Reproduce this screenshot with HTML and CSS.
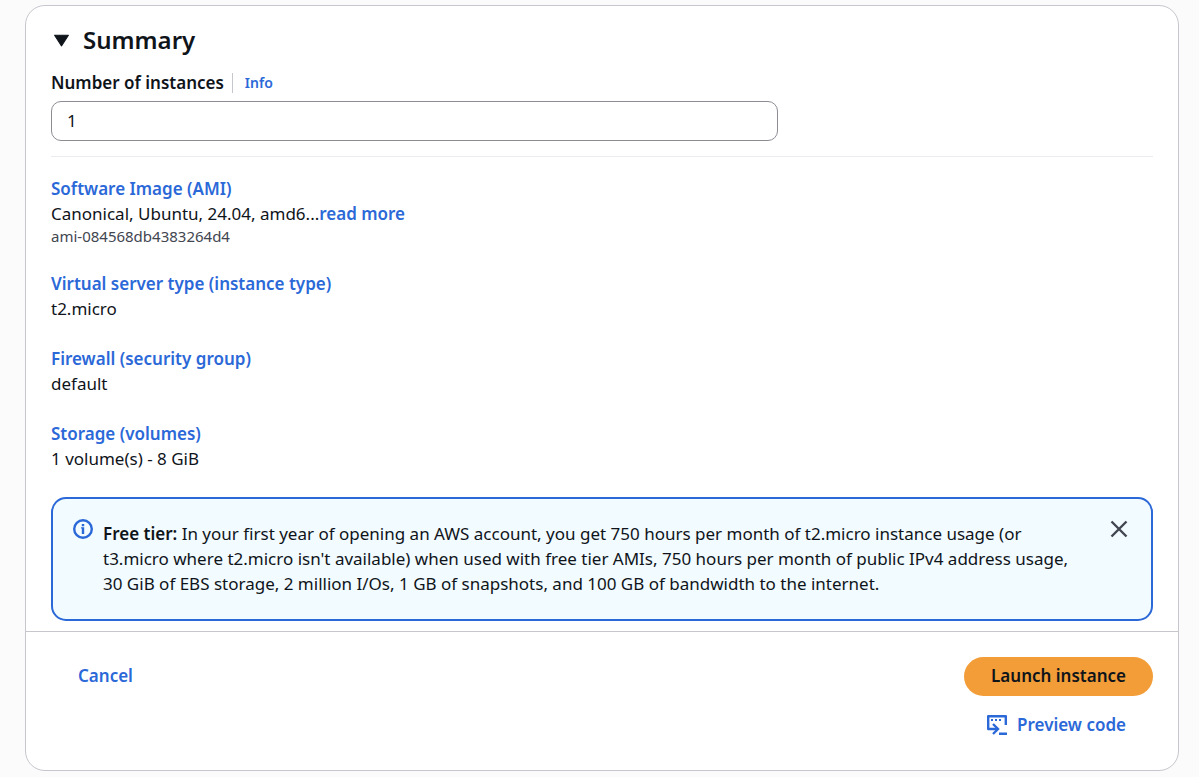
FILE: index.html
```html
<!DOCTYPE html>
<html lang="en">
<head>
<meta charset="utf-8">
<title>Summary</title>
<link rel="stylesheet" href="styles.css">
</head>
<body>
<main class="card">
  <section class="content">
    <h2 class="title">
      <button class="toggle" type="button" aria-expanded="true">
        <svg class="caret" viewBox="0 0 16 13" aria-hidden="true"><path d="M1.500 2h13L8 12z" fill="currentColor" stroke="currentColor" stroke-linejoin="round"/></svg>
        Summary
      </button>
    </h2>
    <div class="field-head">
      <label class="field-label" for="count">Number of instances</label>
      <a class="info" href="#info">Info</a>
    </div>
    <input class="count" id="count" type="text" inputmode="numeric" value="1">
    <div class="details">
      <div class="item">
        <a class="link" href="#ami">Software Image (AMI)</a>
        <div>Canonical, Ubuntu, 24.04, amd6...<a class="link" href="#more">read more</a></div>
        <div class="note">ami-084568db4383264d4</div>
      </div>
      <div class="item">
        <a class="link" href="#type">Virtual server type (instance type)</a>
        <div>t2.micro</div>
      </div>
      <div class="item">
        <a class="link" href="#firewall">Firewall (security group)</a>
        <div>default</div>
      </div>
      <div class="item">
        <a class="link" href="#storage">Storage (volumes)</a>
        <div>1 volume(s) - 8 GiB</div>
      </div>
    </div>
    <div class="alert" role="status">
      <svg class="alert-icon" viewBox="0 0 20 20" aria-hidden="true"><circle cx="10" cy="10" r="8.800" fill="none" stroke="currentColor" stroke-width="2.400"/><path d="M8.800 5h2.400v2.200H8.800zM8 8.200h3.200V15H8.800V9.400H8z" fill="currentColor"/></svg>
      <p class="alert-text"><strong>Free tier:</strong> In your first year of opening an AWS account, you get 750 hours per month of t2.micro instance usage (or t3.micro where t2.micro isn't available) when used with free tier AMIs, 750 hours per month of public IPv4 address usage, 30 GiB of EBS storage, 2 million I/Os, 1 GB of snapshots, and 100 GB of bandwidth to the internet.</p>
      <button class="close" type="button" aria-label="Close">
        <svg viewBox="0 0 20 20" aria-hidden="true"><path d="M2.500 2.500l15 15M17.500 2.500l-15 15" fill="none" stroke="currentColor" stroke-width="2.400"/></svg>
      </button>
    </div>
  </section>
  <footer class="footer">
    <button class="text-button" type="button">Cancel</button>
    <div class="actions">
      <button class="launch" type="button">Launch instance</button>
      <button class="text-button" type="button">
        <svg class="preview-icon" viewBox="0 0 20 20" aria-hidden="true"><path d="M10.500 14H1.200V1.200h17.600V10" fill="none" stroke="currentColor" stroke-width="2.400" stroke-linejoin="round"/><path d="M4 4h2v2H4zM8 4h2v2H8zM12 4h2v2h-2zM12 17.600h8V20h-8z" fill="currentColor"/><path d="M6 9l5 5-5 5" fill="none" stroke="currentColor" stroke-width="2.400"/></svg>
        Preview code
      </button>
    </div>
  </footer>
</main>
</body>
</html>
```
FILE: styles.css
```css
* { box-sizing: border-box; }
body {
  margin: 0;
  padding: 5px 20px 6px 25px;
  background: #fbfbfb;
  color: #0f141a;
  font: 17px/25px "Noto Sans", "Open Sans", sans-serif;
}
button, input { font: inherit; color: inherit; }
button { border: 0; padding: 0; background: none; cursor: pointer; }
a { text-decoration: none; }
svg { display: block; }
.card {
  background: #fff;
  border: 1px solid #c6c6cd;
  border-radius: 20px;
}
.content { padding: 19px 25px 10px; }
.title { margin: 0; font-size: 24px; line-height: 30px; font-weight: 600; }
.toggle { display: flex; align-items: center; gap: 13px; padding-left: 2px; }
.caret { width: 17px; height: 14px; }
.field-head { display: flex; align-items: center; margin-top: 15px; }
.field-label { font-weight: 600; }
.info {
  margin-left: 8px;
  padding-left: 12px;
  border-left: 1px solid #c6c6cd;
  color: #2b68d8;
  font-size: 14px;
  line-height: 20px;
  font-weight: 600;
}
.count {
  display: block;
  width: 66%;
  height: 40px;
  margin-top: 6px;
  padding: 0 15px 2px;
  border: 1px solid #8c8c94;
  border-radius: 10px;
  background: #fff;
}
.details {
  display: grid;
  gap: 25px;
  margin-top: 15px;
  padding-top: 19px;
  border-top: 1px solid #ebebf0;
}
.link { color: #2b68d8; font-weight: 600; }
.note { color: #424650; font-size: 15px; line-height: 20px; }
.alert {
  display: flex;
  align-items: flex-start;
  gap: 10px;
  margin-top: 26px;
  padding: 20px;
  border: 2px solid #2b68d8;
  border-radius: 15px;
  background: #f2fbff;
}
.alert-icon { flex: none; width: 20px; height: 20px; color: #2b68d8; }
.alert-text { flex: 1; margin: 0; padding: 2px 0 3px; }
.alert-text strong { font-weight: 600; }
.close { flex: none; margin: 0 2px 0 15px; color: #424650; }
.close svg { width: 20px; height: 20px; }
.footer {
  display: flex;
  justify-content: space-between;
  align-items: flex-start;
  padding: 25px;
  border-top: 1px solid #c6c6cd;
}
.text-button {
  display: flex;
  align-items: center;
  gap: 10px;
  padding: 6px 27px 8px;
  color: #2b68d8;
  font-weight: 600;
}
.actions { display: flex; flex-direction: column; align-items: flex-end; gap: 10px; }
.launch {
  padding: 6px 27px 8px;
  border-radius: 20px;
  background: #f29d38;
  font-weight: 600;
}
.preview-icon { width: 20px; height: 20px; }
```
